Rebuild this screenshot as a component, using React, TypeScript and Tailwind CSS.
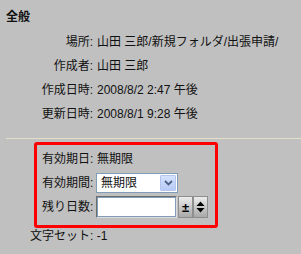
import React from "react";

const FONT = { fontFamily: '"Liberation Sans", "Noto Sans CJK JP", sans-serif' };

const info: [string, string][] = [
  ["場所:", "山田 三郎/新規フォルダ/出張申請/"],
  ["作成者:", "山田 三郎"],
  ["作成日時:", "2008/8/2 2:47 午後"],
  ["更新日時:", "2008/8/1 9:28 午後"],
];

const SpinButton: React.FC<{ children: React.ReactNode }> = ({ children }) => (
  <div className="w-[15px] h-[22px] flex items-center justify-center border border-[#8e8e8e] bg-gradient-to-b from-[#ececec] to-[#a9a9a9] text-black">
    {children}
  </div>
);

export default function App() {
  return (
    <div
      className="w-[301px] h-[254px] bg-[#c0c0c0] text-[12px] leading-[14px] text-[#111] overflow-hidden"
      style={FONT}
    >
      <div className="pl-[6px] pt-[10px] font-bold">全般</div>

      <div className="mt-[6px] grid grid-cols-[93px_1fr]">
        {info.map(([label, value]) => (
          <React.Fragment key={label}>
            <div className="h-[24px] flex items-center justify-end">{label}</div>
            <div className="h-[24px] flex items-center pl-[4px] whitespace-nowrap">{value}</div>
          </React.Fragment>
        ))}
      </div>

      <div className="mt-[12px] ml-[6px] h-px bg-[#e4e0c8]" />

      <div className="mt-[3px] ml-[34px] w-[184px] h-[86px] border-[3px] border-[#ff0000] rounded-[3px] pl-[5px] pt-[2px]">
        <div className="h-[24px] flex items-center">
          <div className="w-[55px]">有効期日:</div>
          <div>無期限</div>
        </div>

        <div className="h-[24px] flex items-center">
          <div className="w-[54px]">有効期間:</div>
          <div className="w-[82px] h-[20px] bg-white border border-[#7f9db9] flex items-center justify-between pl-[4px] pr-[1px]">
            <span>無期限</span>
            <div className="w-[16px] h-[16px] rounded-[1px] border border-[#b4c6ee] bg-gradient-to-b from-[#d6e2fd] to-[#b7cbf8] flex items-center justify-center">
              <svg width="9" height="6" viewBox="0 0 9 6">
                <path d="M1 1 L4.5 4.5 L8 1" fill="none" stroke="#4d6185" strokeWidth="1.8" />
              </svg>
            </div>
          </div>
        </div>

        <div className="h-[24px] flex items-center">
          <div className="w-[54px]">残り日数:</div>
          <div className="flex items-center">
            <div className="border border-t-[#6d6d6d] border-l-[#6d6d6d] border-b-[#dcdcdc] border-r-[#dcdcdc]">
              <div className="w-[79px] h-[20px] bg-white border border-[#7f9db9]" />
            </div>
            <div className="ml-px flex">
              <SpinButton>
                <span className="text-[13px] leading-[13px] font-bold">±</span>
              </SpinButton>
              <SpinButton>
                <svg width="9" height="12" viewBox="0 0 9 12">
                  <path d="M4.5 0.5 L8.5 5 L0.5 5 Z" fill="#000" />
                  <path d="M4.5 11.5 L8.5 7 L0.5 7 Z" fill="#000" />
                </svg>
              </SpinButton>
            </div>
          </div>
        </div>
      </div>

      <div className="mt-px pl-[30px]">文字セット: -1</div>
    </div>
  );
}
